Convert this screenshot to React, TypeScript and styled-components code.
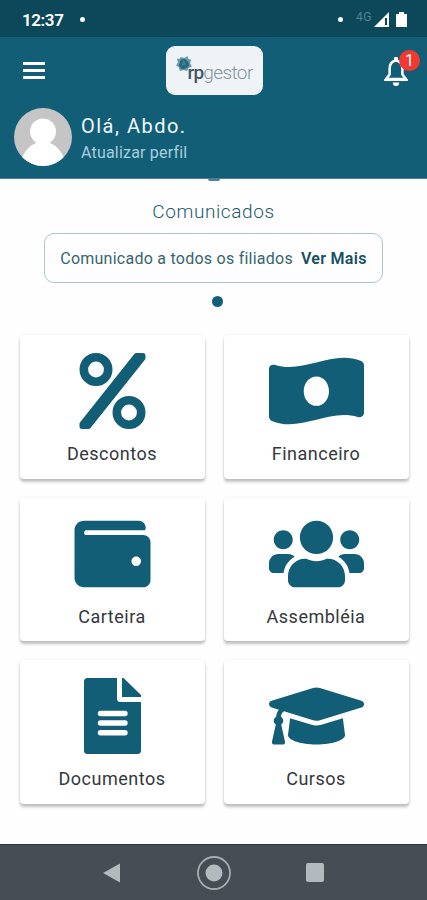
import React from 'react';
import styled, { createGlobalStyle } from 'styled-components';
import { FaWallet, FaUsers, FaGraduationCap } from 'react-icons/fa';

const GlobalStyle = createGlobalStyle`
  * { box-sizing: border-box; }
  body { margin: 0; background: #fefefe; font-family: Roboto, "Liberation Sans", sans-serif; }
  svg { display: block; flex: none; }
`;

const Screen = styled.div`
  width: 427px;
  height: 900px;
  display: flex;
  flex-direction: column;
  overflow: hidden;
  background: #fefefe;
`;

const StatusBar = styled.div`
  height: 37px;
  flex: none;
  display: flex;
  align-items: center;
  padding: 2px 14px 0 22px;
  background: #0d485a;
  color: #fff;
`;

const Clock = styled.span`
  font-size: 17px;
  line-height: 20px;
  font-weight: 600;
  letter-spacing: -0.4px;
  width: 58px;
`;

const StatusDot = styled.span`
  width: 5px;
  height: 5px;
  border-radius: 50%;
  background: #fff;
`;

const StatusRight = styled.div`
  margin-left: auto;
  display: flex;
  align-items: center;
`;

const Network = styled.span`
  font-size: 12px;
  line-height: 14px;
  color: #55818e;
  letter-spacing: 0.6px;
  margin: -5px 1px 0 13px;
`;

const Header = styled.header`
  height: 142px;
  flex: none;
  background: #135e77;
  border-bottom: 1px solid #4b7f91;
`;

const TopBar = styled.div`
  height: 66px;
  display: grid;
  grid-template-columns: 1fr 98px 1fr;
  align-items: center;
  padding: 0 17px 0 23px;
`;

const MenuButton = styled.button`
  width: 22px;
  height: 17px;
  padding: 0;
  border: 0;
  background: none;
  display: flex;
  flex-direction: column;
  justify-content: space-between;
`;

const MenuLine = styled.span`
  height: 3px;
  background: #fff;
`;

const Logo = styled.div`
  width: 97px;
  height: 49px;
  margin-left: -2px;
  border-radius: 9px;
  background: #eff3f6;
  display: flex;
  align-items: flex-start;
  padding: 10px 0 0 10px;
`;

const LogoText = styled.span<{ $strong?: boolean }>`
  font-size: 19px;
  line-height: 22px;
  font-weight: ${p => (p.$strong ? 500 : 300)};
  color: ${p => (p.$strong ? '#45565f' : '#81949e')};
  letter-spacing: ${p => (p.$strong ? '-0.8px' : '-0.6px')};
  margin-left: ${p => (p.$strong ? '-4px' : '0')};
  margin-top: 6px;
`;

const BellButton = styled.div`
  position: relative;
  width: 26px;
  height: 30px;
  justify-self: end;
  margin: 4px 1px 0 0;
`;

const Badge = styled.span`
  position: absolute;
  left: 16px;
  top: -7px;
  width: 21px;
  height: 21px;
  border-radius: 50%;
  background: #f13932;
  color: #fff;
  text-align: center;
  font-size: 16px;
  line-height: 21px;
`;

const Profile = styled.div`
  display: flex;
  align-items: center;
  gap: 9px;
  padding: 5px 0 0 14px;
`;

const ProfileText = styled.div`
  padding-top: 3px;
`;

const Greeting = styled.div`
  font-size: 20px;
  line-height: 26px;
  letter-spacing: 1.5px;
  color: #eef8fb;
`;

const ProfileLink = styled.div`
  font-size: 16px;
  line-height: 22px;
  margin-top: 3px;
  letter-spacing: 0.2px;
  color: #a9cfde;
`;

const Main = styled.main`
  flex: 1;
  display: flex;
  flex-direction: column;
  align-items: center;
`;

const HiddenIndicator = styled.div`
  width: 12px;
  height: 2px;
  border-radius: 0 0 6px 6px;
  background: #4d8294;
`;

const SectionTitle = styled.h1`
  margin: 18px 0 0;
  font-size: 19px;
  line-height: 26px;
  font-weight: 300;
  letter-spacing: 0.6px;
  color: #1e586a;
`;

const Notice = styled.div`
  width: 339px;
  height: 50px;
  margin-top: 8px;
  display: flex;
  align-items: center;
  justify-content: center;
  gap: 8px;
  border: 1px solid #adc6c9;
  border-radius: 10px;
  font-size: 16px;
  color: #366570;
  letter-spacing: 0.25px;
  white-space: nowrap;
`;

const More = styled.strong`
  font-weight: 600;
  color: #164e64;
  letter-spacing: 0.3px;
`;

const PageDot = styled.span`
  width: 11px;
  height: 11px;
  margin: 13px 0 0 8px;
  border-radius: 50%;
  background: #115e78;
`;

const Grid = styled.div`
  margin: 28px 0 0 1px;
  display: grid;
  grid-template-columns: 185px 185px;
  gap: 19px;
`;

const Card = styled.div`
  height: 143.5px;
  border-radius: 4px;
  background: #fff;
  display: flex;
  flex-direction: column;
  align-items: center;
  padding: 18px 0 0;
  color: #135e77;
  box-shadow: 0 3px 3px rgba(0, 0, 0, 0.24), 0 0 3px rgba(0, 0, 0, 0.07);
`;

const IconSlot = styled.div`
  width: 96px;
  height: 76px;
  display: flex;
  justify-content: center;
  svg { width: 95px; height: 76px; }
`;

const CardLabel = styled.div`
  margin-top: 12px;
  font-size: 18px;
  line-height: 26px;
  letter-spacing: 0.5px;
  color: #34383b;
`;

const NavBar = styled.nav`
  height: 56px;
  flex: none;
  border-top: 1px solid #30383f;
  background: #464d55;
  display: flex;
  align-items: center;
  justify-content: space-between;
  padding: 0 103px 0 103px;
`;

const Recent = styled.span`
  width: 18px;
  height: 19px;
  border-radius: 2px;
  background: #b2babd;
`;

const PercentIcon = () => (
  <svg viewBox="0 0 66 76" fill="none" stroke="currentColor">
    <circle cx="16.5" cy="16.5" r="12.2" strokeWidth="8.600" />
    <circle cx="49.5" cy="59.5" r="12.2" strokeWidth="8.600" />
    <path d="M2.800 73.200h6L63.200 5V2.800H57L2.800 71Z" fill="currentColor" strokeWidth="5.600" strokeLinejoin="round" />
  </svg>
);

const DocumentIcon = () => (
  <svg viewBox="0 0 57 76" fill="currentColor">
    <path d="M3.500 0H33v20.500a3.500 3.500 0 0 0 3.500 3.500H57v48.500a3.500 3.500 0 0 1-3.500 3.500h-50A3.500 3.500 0 0 1 0 72.500v-69A3.500 3.500 0 0 1 3.500 0Z" />
    <path d="M38 0h1.500L57 17v2H38Z" />
    <path d="M16.500 35.500h24.500M16.500 45h24.500M16.500 54.800h24.500" stroke="#fff" strokeWidth="5.400" strokeLinecap="round" />
  </svg>
);

const BanknoteIcon = () => (
  <svg viewBox="0 0 640 512" fill="currentColor">
    <path
      fillRule="evenodd"
      d="M621.16 54.46C582.37 38.19 543.55 32 504.75 32c-123.17-.01-246.33 62.34-369.5 62.34-30.89 0-61.76-3.92-92.65-13.72C21 74 0 83 0 104v324c0 12.63 7.23 24.6 18.84 29.46C57.63 473.81 96.45 480 135.25 480c123.17 0 246.34-62.35 369.51-62.35 30.89 0 61.76 3.92 92.65 13.72 21 6 42.6-8 42.6-30.19V83.93c0-12.64-7.24-24.6-18.85-29.47zM320 158c-48 0-86 45-86 99s38 99 86 99 84-45 84-99-36-99-84-99z"
    />
  </svg>
);

const BellIcon = () => (
  <svg width="26" height="30" viewBox="0 0 26 30" fill="none">
    <path d="M13 3.6C8.4 4.4 6.6 8.2 6.6 12v5.4L3 22h20l-3.6-4.6V12c0-3.8-1.8-7.6-6.4-8.4Z" stroke="#fff" strokeWidth="2.5" strokeLinejoin="round" />
    <path d="M11 1.5a2 2 0 0 1 4 0V4h-4zM1.2 22h23.6v2H1.2zM9.8 25.4h6.4a3.2 3.6 0 0 1-6.4 0Z" fill="#fff" />
  </svg>
);

const Avatar = () => (
  <svg width="58" height="58" viewBox="0 0 58 58">
    <defs>
      <clipPath id="avatar">
        <circle cx="29" cy="29" r="29" />
      </clipPath>
    </defs>
    <g clipPath="url(#avatar)">
      <path fill="#c6c5c5" d="M0 0h58v58H0z" />
      <circle cx="29" cy="23.5" r="13" fill="#fff" />
      <path fill="#fff" d="M22 33v2c-7 3-11 8-13.5 14L12 58h34l3.500-9C47 43 43 38 36 35v-2z" />
    </g>
  </svg>
);

const LogoMark = () => (
  <svg width="16" height="16" viewBox="0 0 17 17">
    <path fill="#6b9aac" d="M5 1l4 1 3-2 1 3 3 1-1 4 2 3-4 2-1 3-4-1-4 1-1-4-3-2 2-3-1-4 3 0z" />
    <path fill="#28677f" d="M5 4l4-1 4 3 1 4-3 3-5 1-3-4z" />
    <path fill="#438195" d="M8 4l3 5-5 1z" />
  </svg>
);

const cards: { label: string; icon: React.ReactNode }[] = [
  { label: 'Descontos', icon: <PercentIcon /> },
  { label: 'Financeiro', icon: <BanknoteIcon /> },
  { label: 'Carteira', icon: <FaWallet /> },
  { label: 'Assembléia', icon: <FaUsers /> },
  { label: 'Documentos', icon: <DocumentIcon /> },
  { label: 'Cursos', icon: <FaGraduationCap /> },
];

export default function App() {
  return (
    <>
      <GlobalStyle />
      <Screen>
        <StatusBar>
          <Clock>12:37</Clock>
          <StatusDot />
          <StatusRight>
            <StatusDot />
            <Network>4G</Network>
            <svg width="40" height="18" viewBox="0 0 40 18">
              <path d="M1 16 16 1v15Z" fill="#fff" />
              <path d="M12 7h2v7h-2z" fill="#0d485a" />
              <path d="M23 3h3V1h5v2h3v13H23z" fill="#fff" />
            </svg>
          </StatusRight>
        </StatusBar>
        <Header>
          <TopBar>
            <MenuButton aria-label="Menu">
              <MenuLine />
              <MenuLine />
              <MenuLine />
            </MenuButton>
            <Logo>
              <LogoMark />
              <LogoText $strong>rp</LogoText>
              <LogoText>gestor</LogoText>
            </Logo>
            <BellButton>
              <BellIcon />
              <Badge>1</Badge>
            </BellButton>
          </TopBar>
          <Profile>
            <Avatar />
            <ProfileText>
              <Greeting>Olá, Abdo.</Greeting>
              <ProfileLink>Atualizar perfil</ProfileLink>
            </ProfileText>
          </Profile>
        </Header>
        <Main>
          <HiddenIndicator />
          <SectionTitle>Comunicados</SectionTitle>
          <Notice>
            <span>Comunicado a todos os filiados</span>
            <More>Ver Mais</More>
          </Notice>
          <PageDot />
          <Grid>
            {cards.map(card => (
              <Card key={card.label}>
                <IconSlot>{card.icon}</IconSlot>
                <CardLabel>{card.label}</CardLabel>
              </Card>
            ))}
          </Grid>
        </Main>
        <NavBar>
          <svg width="18" height="20" viewBox="0 0 18 20">
            <path d="M17 0.500v19L0 10Z" fill="#b2babd" />
          </svg>
          <svg width="34" height="34" viewBox="0 0 34 34">
            <circle cx="17" cy="17" r="16" fill="none" stroke="#a5adb0" strokeWidth="1.8" />
            <circle cx="17" cy="17" r="8.500" fill="#b2babd" />
          </svg>
          <Recent />
        </NavBar>
      </Screen>
    </>
  );
}
